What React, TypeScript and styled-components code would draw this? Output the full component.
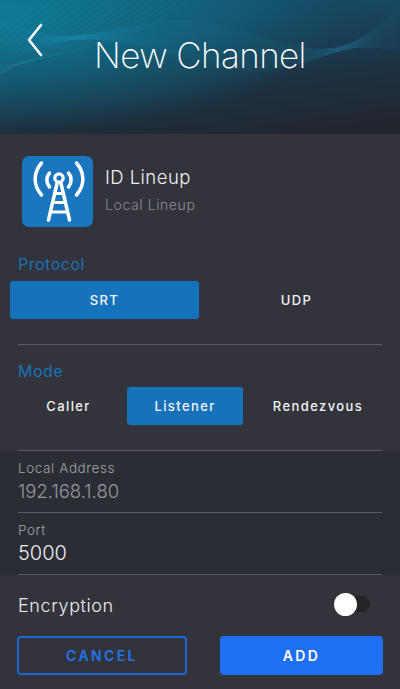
import styled, { createGlobalStyle } from "styled-components";

const GlobalStyle = createGlobalStyle`
    html, body {
        margin: 0;
        padding: 0;
        background-color: #33333b;
    }
    * {
        box-sizing: border-box;
    }
`;

const waves = Array.from({ length: 26 }, (_, i) => {
    const a = 10 + i * 2.6;
    const b = 70 - i * 2.2;
    const c = 4 + i * 1.6;
    return `M-10 ${a} C 70 ${b}, 130 ${c}, 220 ${c + 22} S 340 ${b + 6}, 410 ${a - 16}`;
});

const fans = Array.from({ length: 18 }, (_, i) => {
    const x = 40 + i * 9;
    return `M${x} -4 C ${x - 40} 30, ${x - 90} 50, -6 ${92 - i * 1.5}`;
});

const Waves = () => (
    <WaveArt viewBox="0 0 400 134" preserveAspectRatio="none" aria-hidden="true">
        {waves.map((d) => (
            <path key={d} d={d} fill="none" stroke="#2ea6d0" strokeWidth="0.5" opacity="0.14" />
        ))}
        {fans.map((d) => (
            <path key={d} d={d} fill="none" stroke="#5fd0dc" strokeWidth="0.5" opacity="0.12" />
        ))}
    </WaveArt>
);

const TowerIcon = () => (
    <svg width="71" height="71" viewBox="0 0 71 71" fill="none" stroke="#ffffff" strokeLinecap="round" strokeLinejoin="round">
        <circle cx="37" cy="22" r="4.2" strokeWidth="3.2" />
        <path d="M35 27.5 L26.5 64 M39 27.5 L47.5 64" strokeWidth="3.5" />
        <path d="M32.5 37.5 H41.5 M30.5 46.5 H43.5 M28.5 56 H45.5" strokeWidth="3" />
        <path d="M27.5 17 C 24 21, 24 27, 27.5 31" strokeWidth="3.5" />
        <path d="M46.5 17 C 50 21, 50 27, 46.5 31" strokeWidth="3.5" />
        <path d="M19.5 7 C 11 17, 11 29, 19.5 39" strokeWidth="3.5" />
        <path d="M54.5 7 C 63 17, 63 29, 54.5 39" strokeWidth="3.5" />
    </svg>
);

export default function App() {
    return (
        <>
            <GlobalStyle />
            <Page>
                <Header>
                    <Waves />
                    <BackButton aria-label="Back">
                        <svg width="18" height="34" viewBox="0 0 18 34" fill="none">
                            <path d="M15 2 L3 17 L15 32" stroke="#ffffff" strokeWidth="2.6" strokeLinecap="round" strokeLinejoin="round" />
                        </svg>
                    </BackButton>
                    <Title>New Channel</Title>
                </Header>

                <SourceRow>
                    <IconTile>
                        <TowerIcon />
                    </IconTile>
                    <SourceText>
                        <SourceName>ID Lineup</SourceName>
                        <SourceType>Local Lineup</SourceType>
                    </SourceText>
                </SourceRow>

                <SectionLabel $top={27}>Protocol</SectionLabel>
                <ProtocolGroup>
                    <Choice $active>SRT</Choice>
                    <Choice>UDP</Choice>
                </ProtocolGroup>
                <Divider $top={25} />

                <SectionLabel $top={16}>Mode</SectionLabel>
                <ModeGroup>
                    <Choice>Caller</Choice>
                    <Choice $active>Listener</Choice>
                    <Choice>Rendezvous</Choice>
                </ModeGroup>
                <Divider $top={25} />

                <FieldBand>
                    <Field>
                        <FieldLabel>Local Address</FieldLabel>
                        <FieldValue $muted>192.168.1.80</FieldValue>
                    </Field>
                    <Divider $top={0} />
                    <Field>
                        <FieldLabel>Port</FieldLabel>
                        <FieldValue>5000</FieldValue>
                    </Field>
                    <Divider $top={0} />
                </FieldBand>

                <EncryptionRow>
                    <EncryptionLabel>Encryption</EncryptionLabel>
                    <Toggle>
                        <Knob />
                    </Toggle>
                </EncryptionRow>

                <Actions>
                    <CancelButton>CANCEL</CancelButton>
                    <AddButton>ADD</AddButton>
                </Actions>
            </Page>
        </>
    );
}

const Page = styled.div`
    width: 400px;
    height: 689px;
    overflow: hidden;
    display: flex;
    flex-direction: column;
    background-color: #33333b;
    font-family: Inter, "Noto Sans", sans-serif;
    color: #ffffff;
`;

const Header = styled.header`
    position: relative;
    flex: none;
    height: 134px;
    padding: 23px 0 0 26px;
    background:
        radial-gradient(ellipse 340px 120px at 0% 10%, #0e7a96 0%, rgba(14, 122, 150, 0) 100%),
        linear-gradient(172deg, #135670 0%, #174660 30%, #1c3344 62%, #22252e 92%);
`;

const WaveArt = styled.svg`
    position: absolute;
    top: 0;
    left: 0;
    width: 100%;
    height: 100%;
`;

const BackButton = styled.div`
    position: relative;
    display: flex;
    width: 18px;
    height: 34px;
`;

const Title = styled.h1`
    position: absolute;
    top: 33px;
    left: 0;
    width: 100%;
    margin: 0;
    text-align: center;
    font-size: 35px;
    line-height: 44px;
    font-weight: 200;
    letter-spacing: -0.6px;
`;

const SourceRow = styled.div`
    flex: none;
    display: flex;
    align-items: stretch;
    gap: 12px;
    margin: 22px 0 0 22px;
`;

const IconTile = styled.div`
    width: 71px;
    height: 71px;
    border-radius: 7px;
    background-color: #1b76c0;
`;

const SourceText = styled.div`
    display: flex;
    flex-direction: column;
    padding-top: 9px;
    gap: 7px;
`;

const SourceName = styled.div`
    font-size: 18.5px;
    line-height: 24px;
    font-weight: 300;
    letter-spacing: 0.45px;
    color: #f0f0f2;
`;

const SourceType = styled.div`
    font-size: 14px;
    line-height: 18px;
    font-weight: 300;
    letter-spacing: 0.6px;
    color: #8c8b92;
`;

const SectionLabel = styled.div<{ $top: number }>`
    flex: none;
    margin: ${(p) => p.$top}px 0 0 18px;
    font-size: 16px;
    line-height: 20px;
    font-weight: 400;
    letter-spacing: 0.5px;
    color: #1b72b8;
`;

const ProtocolGroup = styled.div`
    flex: none;
    display: grid;
    grid-template-columns: 189px 195px;
    margin: 7px 0 0 10px;
    height: 38px;
`;

const ModeGroup = styled.div`
    flex: none;
    display: grid;
    grid-template-columns: 117px 116px 150px;
    margin: 6px 0 0 10px;
    height: 38px;
`;

const Choice = styled.div<{ $active?: boolean }>`
    display: flex;
    align-items: center;
    justify-content: center;
    border-radius: 3px;
    font-size: 13px;
    font-weight: 500;
    letter-spacing: 1.4px;
    color: #f4f4f4;
    background-color: ${(p) => (p.$active ? "#1673bb" : "transparent")};
`;

const Divider = styled.div<{ $top: number }>`
    flex: none;
    height: 1px;
    margin: ${(p) => p.$top}px 18px 0;
    background-color: #5b5c63;
`;

const FieldBand = styled.div`
    flex: none;
    display: flex;
    flex-direction: column;
    height: 124px;
    background-color: #2b2d34;
`;

const Field = styled.div`
    flex: none;
    height: 61px;
    padding: 9px 18px 0;
`;

const FieldLabel = styled.div`
    font-size: 13.5px;
    line-height: 17px;
    font-weight: 300;
    letter-spacing: 0.6px;
    color: #a3a3a6;
`;

const FieldValue = styled.div<{ $muted?: boolean }>`
    margin-top: 2px;
    font-size: ${(p) => (p.$muted ? "18.5px" : "20px")};
    line-height: 24px;
    font-weight: 300;
    color: ${(p) => (p.$muted ? "#97989c" : "#ececee")};
`;

const EncryptionRow = styled.div`
    flex: none;
    display: flex;
    align-items: center;
    justify-content: space-between;
    height: 60px;
    padding: 0 30px 0 18px;
`;

const EncryptionLabel = styled.div`
    font-size: 18px;
    font-weight: 300;
    letter-spacing: 0.6px;
    color: #eeeeef;
`;

const Toggle = styled.div`
    position: relative;
    width: 36px;
    height: 16px;
    margin-top: -2px;
    border-radius: 8px;
    background-color: #24252b;
`;

const Knob = styled.div`
    position: absolute;
    top: -3px;
    left: 0;
    width: 23px;
    height: 23px;
    border-radius: 50%;
    background-color: #ffffff;
`;

const Actions = styled.div`
    flex: none;
    display: flex;
    justify-content: space-between;
    margin: 1px 17px 0;
    height: 39px;
`;

const CancelButton = styled.div`
    display: flex;
    align-items: center;
    justify-content: center;
    width: 170px;
    border: 2px solid #1b69d6;
    border-radius: 4px;
    font-size: 14px;
    font-weight: 600;
    letter-spacing: 2.4px;
    color: #2176ea;
`;

const AddButton = styled.div`
    display: flex;
    align-items: center;
    justify-content: center;
    width: 163px;
    border-radius: 4px;
    background-color: #1f6ff2;
    font-size: 14px;
    font-weight: 600;
    letter-spacing: 2.4px;
    color: #ffffff;
`;
